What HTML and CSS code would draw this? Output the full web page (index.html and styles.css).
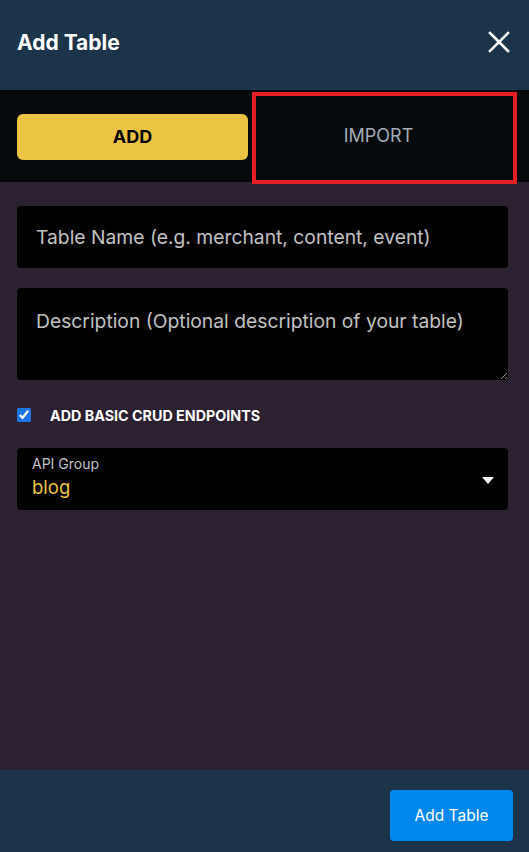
FILE: index.html
```html
<!DOCTYPE html>
<html lang="en">
<head>
  <meta charset="UTF-8" />
  <meta name="viewport" content="width=device-width, initial-scale=1.0" />
  <title>Add Table</title>
  <link rel="stylesheet" href="styles.css">
</head>
<body>
  <div class="panel">
    <header class="panel-head">
      <h1>Add Table</h1>
      <button class="btn-close" aria-label="Close">
        <svg width="22" height="22" viewBox="0 0 22 22">
          <path d="M2 2 L20 20 M20 2 L2 20" stroke="#fff" stroke-width="2.6" stroke-linecap="square" fill="none"/>
        </svg>
      </button>
    </header>

    <div class="tabs">
      <button class="tab tab-active">ADD</button>
      <button class="tab tab-import">IMPORT</button>
    </div>

    <div class="form">
      <input type="text" class="field" placeholder="Table Name (e.g. merchant, content, event)" />
      <textarea class="field field-area" placeholder="Description (Optional description of your table)"></textarea>

      <label class="check">
        <input type="checkbox" checked />
        <span>ADD BASIC CRUD ENDPOINTS</span>
      </label>

      <div class="select">
        <div class="select-text">
          <span class="select-label">API Group</span>
          <span class="select-value">blog</span>
        </div>
        <svg class="select-arrow" width="12" height="7" viewBox="0 0 12 7">
          <path d="M0 0 H12 L6 7 Z" fill="#fff"/>
        </svg>
      </div>
    </div>

    <footer class="panel-foot">
      <button class="btn-submit">Add Table</button>
    </footer>
  </div>
</body>
</html>
```

FILE: styles.css
```css
* {
  box-sizing: border-box;
}

body {
  margin: 0;
  font-family: Inter, "Noto Sans", sans-serif;
  background: #2b2130;
  color: #fff;
}

.panel {
  height: 852px;
  display: flex;
  flex-direction: column;
}

.panel-head {
  height: 90px;
  background: #1c3449;
  display: flex;
  align-items: center;
  justify-content: space-between;
  padding: 0 19px 6px 17px;
}

h1 {
  margin: 0;
  font-size: 21px;
  font-weight: 700;
}

.btn-close {
  background: none;
  border: none;
  padding: 0;
  display: flex;
  cursor: pointer;
}

.tabs {
  height: 92px;
  background: #070a0d;
  display: flex;
  align-items: center;
  gap: 4px;
  padding: 0 12px 0 17px;
}

.tab {
  font-family: inherit;
  font-size: 18px;
  border: none;
  cursor: pointer;
}

.tab-active {
  width: 231px;
  height: 46px;
  background: #ebc443;
  color: #000;
  font-weight: 700;
  border-radius: 6px;
  margin-top: 1px;
}

.tab-import {
  flex: 1;
  align-self: stretch;
  margin-top: 2px;
  margin-bottom: -2px;
  background: #070a0d;
  color: #a3adb7;
  border: 4px solid #e31e24;
  padding: 0 12px 5px 0;
}

.form {
  flex: 1;
  padding: 24px 21px 0 17px;
  display: flex;
  flex-direction: column;
}

.field {
  width: 100%;
  height: 62px;
  background: #000;
  border: none;
  border-radius: 4px;
  padding: 0 19px;
  font-family: inherit;
  font-size: 19.3px;
  color: #fff;
  outline: none;
}

.field::placeholder {
  color: #c2c2c2;
}

.field-area {
  height: 92px;
  margin-top: 20px;
  padding-top: 21px;
  resize: vertical;
}

.check {
  display: flex;
  align-items: center;
  gap: 19px;
  margin-top: 27px;
  font-size: 14.3px;
  font-weight: 700;
}

.check input {
  width: 14px;
  height: 14px;
  margin: 0 0 2px;
  accent-color: #1a73e8;
}

.select {
  margin-top: 24px;
  height: 62px;
  background: #000;
  border-radius: 4px;
  display: flex;
  align-items: center;
  justify-content: space-between;
  padding: 0 14px 0 15px;
}

.select-text {
  display: flex;
  flex-direction: column;
  gap: 4px;
  padding-bottom: 5px;
}

.select-label {
  font-size: 14px;
  color: #c2c2c2;
}

.select-value {
  font-size: 18.5px;
  color: #ebc443;
}

.select-arrow {
  margin-top: 2px;
}

.panel-foot {
  height: 82px;
  background: #1c3449;
  display: flex;
  align-items: flex-start;
  justify-content: flex-end;
  padding: 20px 16px 0;
}

.btn-submit {
  width: 123px;
  height: 51px;
  background: #0088ee;
  color: #fff;
  border: none;
  border-radius: 4px;
  font-family: inherit;
  font-size: 15.5px;
  cursor: pointer;
}

.btn-submit:hover,
.tab:hover {
  opacity: 0.9;
}
```
